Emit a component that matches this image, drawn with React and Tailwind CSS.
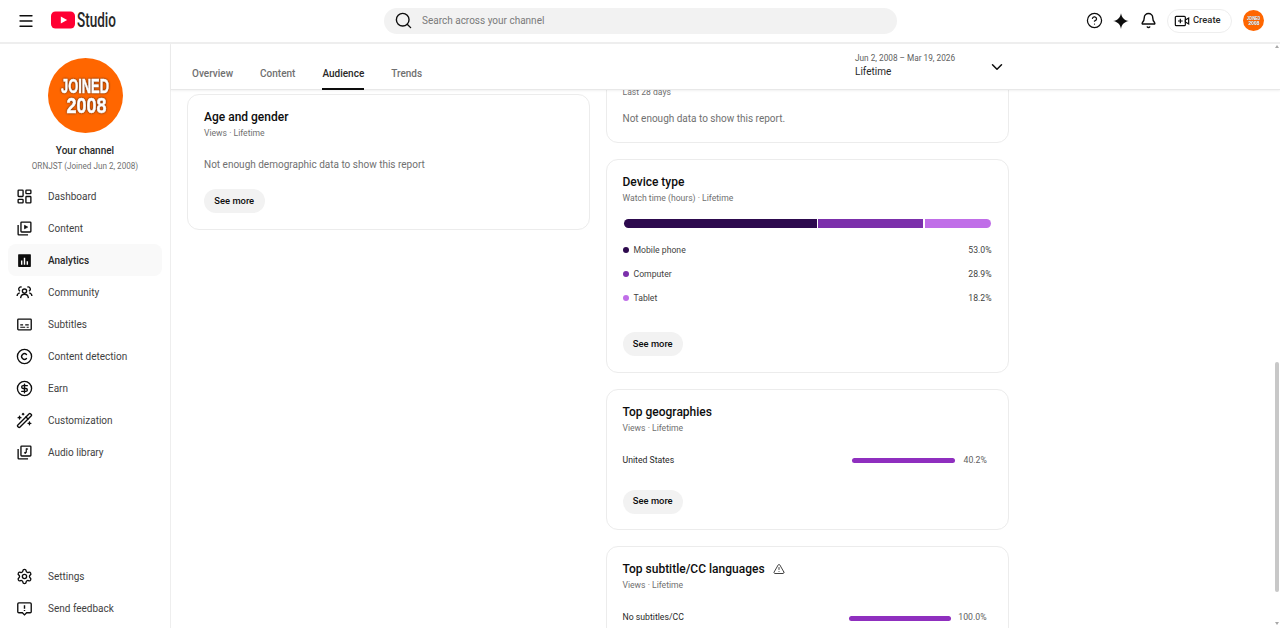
import {
  LayoutDashboard,
  Copyright,
  CircleDollarSign,
  WandSparkles,
  Settings,
  Bell,
  CircleHelp,
  Search,
  ChevronDown,
  TriangleAlert,
  Menu,
} from "lucide-react";

const ContentIcon = (props) => (
  <svg viewBox="0 0 24 24" fill="none" stroke="currentColor" strokeWidth="1.9" {...props}>
    <rect x="7" y="3" width="14" height="14" rx="1" />
    <path d="M3 7v13a1 1 0 0 0 1 1h13" />
    <path d="M12 7.500l4.500 2.500-4.500 2.500z" fill="currentColor" strokeWidth="1" />
  </svg>
);

const AnalyticsIcon = (props) => (
  <svg viewBox="0 0 24 24" {...props}>
    <rect x="3" y="3" width="18" height="18" rx="1" fill="currentColor" />
    <path d="M7 12h2v6H7zM11 8h2v10h-2zM15 13h2v5h-2z" fill="#fff" />
  </svg>
);

const CommunityIcon = (props) => (
  <svg viewBox="0 0 24 24" fill="none" stroke="currentColor" strokeWidth="1.8" {...props}>
    <circle cx="12" cy="10" r="3" />
    <path d="M6.500 20c.4-3.400 2.600-5.500 5.500-5.500s5.100 2.100 5.500 5.500" />
    <path d="M8 4.300A3 3 0 0 0 5.800 10M16 4.300A3 3 0 0 1 18.200 10" />
    <path d="M1.500 17c.3-2.500 1.800-4 3.800-4.400M22.500 17c-.3-2.500-1.800-4-3.800-4.400" />
  </svg>
);

const SubtitlesIcon = (props) => (
  <svg viewBox="0 0 24 24" fill="none" stroke="currentColor" strokeWidth="1.9" {...props}>
    <rect x="2.500" y="4.500" width="19" height="15" rx="1" />
    <path d="M6 12.500h4M13 12.500h5M6 16h7M15 16h3" strokeWidth="1.500" />
  </svg>
);

const AudioIcon = (props) => (
  <svg viewBox="0 0 24 24" fill="none" stroke="currentColor" strokeWidth="1.9" {...props}>
    <rect x="7" y="3" width="14" height="14" rx="1" />
    <path d="M3 7v13a1 1 0 0 0 1 1h13" />
    <path d="M14.500 6.500v6" strokeWidth="1.600" />
    <path d="M14.500 6.500l2.500 1" strokeWidth="1.600" />
    <circle cx="13" cy="12.500" r="1.500" fill="currentColor" stroke="none" />
  </svg>
);

const FeedbackIcon = (props) => (
  <svg viewBox="0 0 24 24" fill="none" stroke="currentColor" strokeWidth="1.9" {...props}>
    <path d="M4 4h16a1.500 1.500 0 0 1 1.500 1.500v11A1.500 1.500 0 0 1 20 18h-5l-3 3-3-3H4a1.500 1.500 0 0 1-1.500-1.500v-11A1.500 1.500 0 0 1 4 4z" />
    <path d="M12 7.500v5M12 14v1.500" strokeWidth="2" />
  </svg>
);

const CreateIcon = (props) => (
  <svg viewBox="0 0 24 24" fill="none" stroke="currentColor" strokeWidth="1.800" {...props}>
    <rect x="2" y="5" width="15" height="14" rx="1.500" />
    <path d="M9.500 8.500v7M6 12h7" />
    <path d="M17 10.500l5-3v9l-5-3z" />
  </svg>
);

const Logo = () => (
  <svg viewBox="0 0 66 24" className="-mt-px h-[24px] w-[66px]">
    <rect x="0" y="3.500" width="24" height="17" rx="4.500" fill="#ff0033" />
    <path d="M9.800 8.600l6.300 3.400-6.300 3.400z" fill="#fff" />
    <text
      x="26"
      y="19"
      textLength="39"
      lengthAdjust="spacingAndGlyphs"
      fontFamily="Roboto, sans-serif"
      fontWeight="500"
      fontSize="20"
      fill="#282828"
    >
      Studio
    </text>
  </svg>
);

const Avatar = ({ className }) => (
  <svg viewBox="0 0 75 75" className={className}>
    <circle cx="37.500" cy="37.500" r="37.500" fill="#ff6600" />
    <g
      fontFamily="'Liberation Sans', sans-serif"
      fontWeight="700"
      fill="#fff"
      stroke="#fff"
      strokeWidth="0.500"
      className="[filter:drop-shadow(0_0_1px_#4a2410)]"
    >
      <text x="13" y="35" fontSize="19.500" textLength="48" lengthAdjust="spacingAndGlyphs">
        JOINED
      </text>
      <text x="18.500" y="55" fontSize="22" textLength="40" lengthAdjust="spacingAndGlyphs">
        2008
      </text>
    </g>
  </svg>
);

const navItems = [
  { label: "Dashboard", icon: LayoutDashboard },
  { label: "Content", icon: ContentIcon },
  { label: "Analytics", icon: AnalyticsIcon, active: true },
  { label: "Community", icon: CommunityIcon },
  { label: "Subtitles", icon: SubtitlesIcon },
  { label: "Content detection", icon: Copyright },
  { label: "Earn", icon: CircleDollarSign },
  { label: "Customization", icon: WandSparkles },
  { label: "Audio library", icon: AudioIcon },
];

const NavRow = ({ item }) => {
  const Icon = item.icon;
  return (
    <div
      className={`flex h-[32px] items-center rounded-lg pl-[8px] text-[10px] ${
        item.active ? "bg-[#f9f9f9] font-medium text-[#282828]" : "text-[#3f3f3f]"
      }`}
    >
      <Icon width={17} height={17} strokeWidth={1.9} className="shrink-0 text-[#0d0d0d]" />
      <span className="ml-[15px]">{item.label}</span>
    </div>
  );
};

const Card = ({ title, sub, icon, children, className = "" }) => (
  <section className={`rounded-xl border border-[#ececec] bg-white px-4 pt-[15px] ${className}`}>
    <div className="flex h-[14px] items-center gap-2 text-[12px] font-medium text-[#0d0d0d]">
      {title}
      {icon}
    </div>
    <div className="mt-[3px] h-[12px] text-[8.6px] leading-[12px] text-[#707070]">{sub}</div>
    {children}
  </section>
);

const SeeMore = ({ className = "" }) => (
  <button className={`block h-[24px] w-[60.5px] rounded-full bg-[#f2f2f2] text-[9.4px] font-medium text-[#0d0d0d] ${className}`}>
    See more
  </button>
);

const BarRow = ({ label, value, barClass, valueClass }) => (
  <div className="mt-[21px] flex h-[12px] items-center pr-[5px] text-[8.7px]">
    <span className="text-[#282828]">{label}</span>
    <span className={`ml-auto h-[5px] rounded-full bg-[#8f2fbf] ${barClass}`} />
    <span className={`text-right text-[#606060] ${valueClass}`}>{value}</span>
  </div>
);

const devices = [
  { label: "Mobile phone", value: "53.0%", dot: "bg-[#2d0a4e]" },
  { label: "Computer", value: "28.9%", dot: "bg-[#7b2fab]" },
  { label: "Tablet", value: "18.2%", dot: "bg-[#c06ee8]" },
];

const tabs = ["Overview", "Content", "Audience", "Trends"];

export default function App() {
  return (
    <div className="relative flex h-[628px] w-[1280px] flex-col overflow-hidden bg-white font-['Roboto',sans-serif]">
      <header className="relative z-20 flex h-[44px] shrink-0 items-center border-b-2 border-[#eeeeee] bg-white pb-[1px]">
        <Menu width={18} height={18} strokeWidth={1.75} className="ml-[17px] text-[#0d0d0d]" />
        <div className="ml-[16px]">
          <Logo />
        </div>
        <div className="ml-[267px] flex h-[26px] w-[513px] items-center rounded-full bg-[#f2f2f2] pl-[10px] text-[10px] text-[#7a7a7a]">
          <Search width={19} height={19} strokeWidth={1.75} className="text-[#0d0d0d]" />
          <span className="ml-[9px]">Search across your channel</span>
        </div>
        <div className="ml-auto flex items-center pr-[16px]">
          <CircleHelp width={17} height={17} strokeWidth={1.75} className="text-[#0d0d0d]" />
          <svg viewBox="0 0 24 24" className="ml-[9px] h-[18px] w-[18px] text-[#0d0d0d]">
            <path d="M12 1.500c1 6 4.500 9.500 10.500 10.500-6 1-9.500 4.500-10.500 10.500-1-6-4.500-9.500-10.500-10.500 6-1 9.500-4.500 10.500-10.500z" fill="currentColor" />
          </svg>
          <Bell width={17} height={17} strokeWidth={2} className="ml-[10px] text-[#0d0d0d]" />
          <div className="ml-[10px] flex h-[24px] w-[65px] items-center rounded-full border border-[#eeeeee] pl-[6px] text-[9.4px] font-medium text-[#282828]">
            <CreateIcon className="h-[16px] w-[16px] text-[#0d0d0d]" />
            <span className="ml-[3px]">Create</span>
          </div>
          <Avatar className="ml-[11px] h-[21px] w-[21px]" />
        </div>
      </header>

      <div className="flex min-h-0 flex-1">
        <aside className="flex w-[171px] shrink-0 flex-col border-r border-[#eeeeee] px-[8px] pb-[4px]">
          <div className="flex flex-col items-center pt-[14px]">
            <Avatar className="h-[75px] w-[75px]" />
            <div className="mt-[10px] text-[10px] font-medium text-[#282828]">Your channel</div>
            <div className="mt-[2px] text-[8.15px] text-[#707070]">ORNJST (Joined Jun 2, 2008)</div>
          </div>
          <nav className="mt-[8px]">
            {navItems.map((item) => (
              <NavRow key={item.label} item={item} />
            ))}
          </nav>
          <div className="mt-auto">
            <NavRow item={{ label: "Settings", icon: Settings }} />
            <NavRow item={{ label: "Send feedback", icon: FeedbackIcon }} />
          </div>
        </aside>

        <main className="flex min-w-0 flex-1 flex-col">
          <div className="relative z-10 flex h-[46px] shrink-0 border-b border-[#e8e8e8] bg-white pl-[21px] pr-[274px] shadow-[0_1px_2px_rgba(0,0,0,0.06)]">
            <div className="flex gap-[27px] pt-[22px] text-[10px] font-medium text-[#707070]">
              {tabs.map((tab) => (
                <div
                  key={tab}
                  className={
                    tab === "Audience"
                      ? "h-[24px] border-b-2 border-[#0d0d0d] text-[#282828]"
                      : "h-[24px]"
                  }
                >
                  {tab}
                </div>
              ))}
            </div>
            <div className="ml-auto w-[133px] pt-[9px]">
              <div className="text-[8.25px] leading-[11px] text-[#606060]">Jun 2, 2008 – Mar 19, 2026</div>
              <div className="mt-[1px] text-[10px] leading-[13px] text-[#282828]">Lifetime</div>
            </div>
            <ChevronDown width={18} height={18} strokeWidth={2} className="mt-[14px] text-[#0d0d0d]" />
          </div>

          <div className="flex min-h-0 flex-1 items-start gap-[15.5px] overflow-hidden px-4">
            <div className="mt-[4px] w-[403px] shrink-0">
              <Card title="Age and gender" sub="Views · Lifetime" className="h-[136px]">
                <p className="mt-[19px] text-[10px] leading-[14px] text-[#707070]">
                  Not enough demographic data to show this report
                </p>
                <SeeMore className="mt-[17px]" />
              </Card>
            </div>

            <div className="flex w-[403px] shrink-0 flex-col gap-4">
              <section className="-mt-[20px] h-[73px] rounded-xl border border-[#ececec] bg-white px-4 pt-[15px]">
                <div className="h-[12px] text-[8.6px] leading-[12px] text-[#707070]">Last 28 days</div>
                <p className="mt-[14px] text-[10px] leading-[14px] text-[#707070]">
                  Not enough data to show this report.
                </p>
              </section>

              <Card title="Device type" sub="Watch time (hours) · Lifetime" className="h-[213.5px]">
                <div className="mt-[15px] flex h-[9px] gap-[1.5px] pl-px">
                  <span className="w-[193px] rounded-l-full bg-[#2d0a4e]" />
                  <span className="w-[105px] bg-[#7b2fab]" />
                  <span className="w-[66px] rounded-r-full bg-[#c06ee8]" />
                </div>
                <div className="mt-[10px]">
                  {devices.map((d) => (
                    <div key={d.label} className="flex h-[24px] items-center text-[8.67px] text-[#3f3f3f]">
                      <span className={`h-[6px] w-[6px] rounded-full ${d.dot}`} />
                      <span className="ml-[5px]">{d.label}</span>
                      <span className="ml-auto">{d.value}</span>
                    </div>
                  ))}
                </div>
                <SeeMore className="mt-[22px]" />
              </Card>

              <Card title="Top geographies" sub="Views · Lifetime" className="h-[141.5px]">
                <BarRow label="United States" value="40.2%" barClass="w-[103px]" valueClass="ml-[9px] w-[23px]" />
                <SeeMore className="mt-[23px]" />
              </Card>

              <Card
                title="Top subtitle/CC languages"
                sub="Views · Lifetime"
                icon={<TriangleAlert width={12} height={12} strokeWidth={1.75} className="text-[#282828]" />}
                className="h-[120px]"
              >
                <BarRow label="No subtitles/CC" value="100.0%" barClass="w-[102px]" valueClass="ml-[7px] w-[29px]" />
              </Card>
            </div>
          </div>
        </main>
      </div>

      {/* page scrollbar sits over everything */}
      <div className="absolute right-px top-[362px] h-[230px] w-[4px] rounded-full bg-[#c8c8c8]" />
      <div className="absolute right-[1px] top-[622px] h-0 w-0 border-x-[2px] border-t-[3px] border-x-transparent border-t-[#a8a8a8]" />
      <div className="absolute right-[1px] top-[45px] z-30 h-0 w-0 border-x-[2px] border-b-[3px] border-x-transparent border-b-[#a8a8a8]" />
    </div>
  );
}
